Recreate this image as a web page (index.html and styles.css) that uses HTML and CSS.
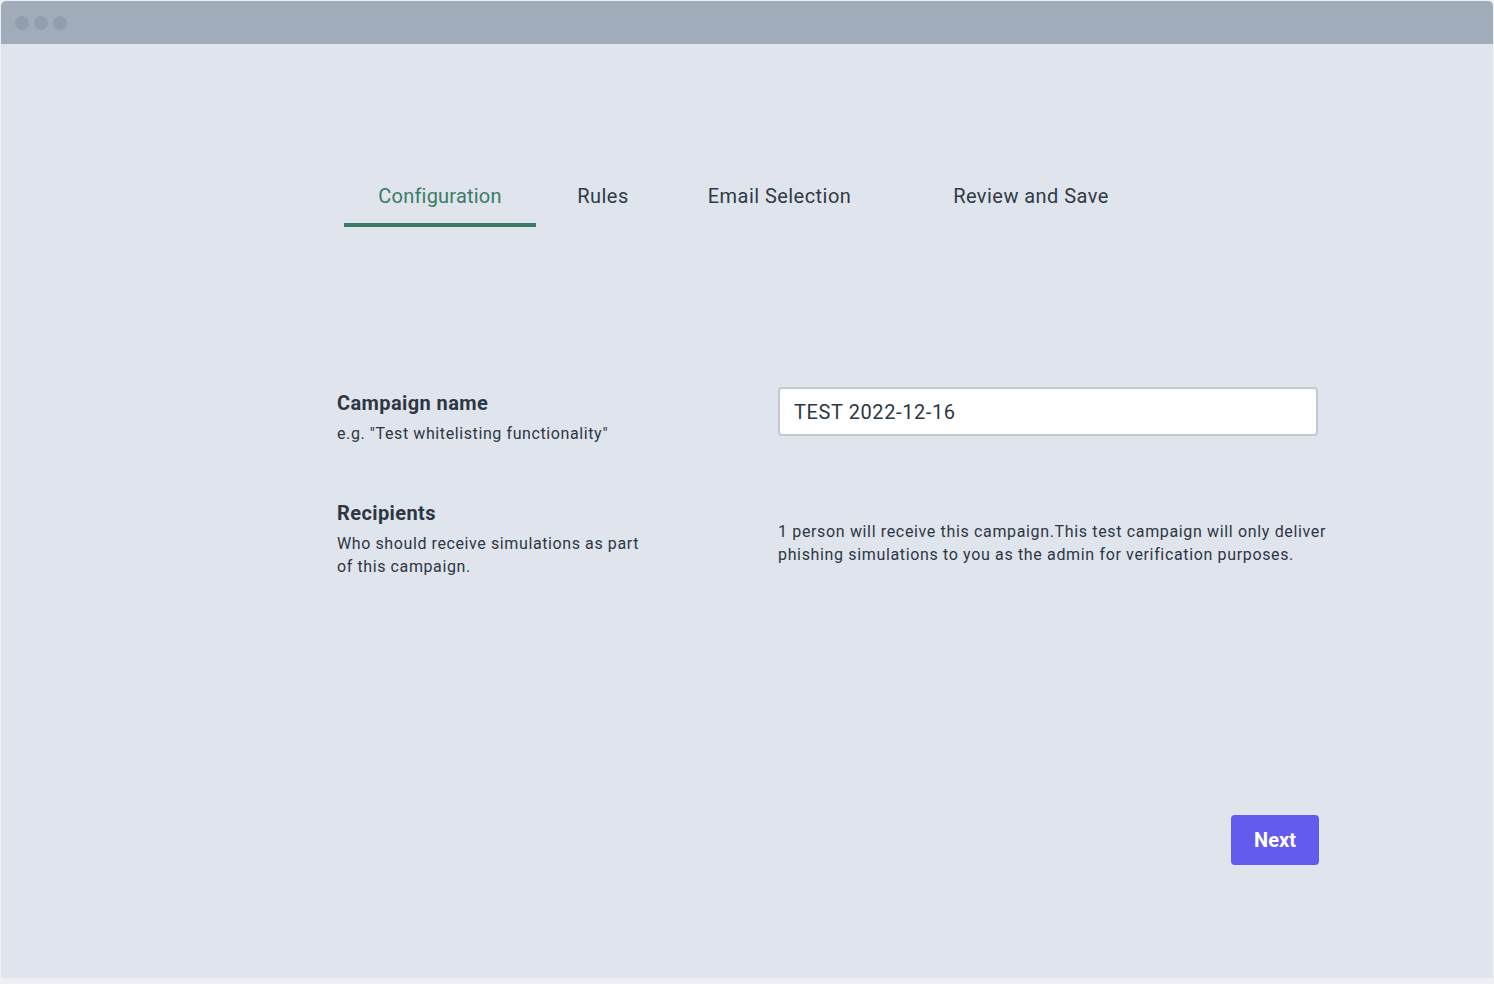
FILE: index.html
```html
<!DOCTYPE html>
<html lang="en">
<head>
<meta charset="utf-8">
<title>Campaign configuration</title>
<link rel="stylesheet" href="styles.css">
</head>
<body>
<div class="window">
  <div class="titlebar">
    <span class="dot"></span><span class="dot"></span><span class="dot"></span>
  </div>
  <div class="content">
    <nav class="tabs">
      <div class="tab tab-config active">Configuration</div>
      <div class="tab tab-rules">Rules</div>
      <div class="tab tab-email">Email Selection</div>
      <div class="tab tab-review">Review and Save</div>
    </nav>
    <div class="form">
      <div class="row row-name">
        <div class="label-col">
          <div class="label">Campaign name</div>
          <div class="hint">e.g. "Test whitelisting functionality"</div>
        </div>
        <div class="field-col">
          <div class="input">TEST 2022-12-16</div>
        </div>
      </div>
      <div class="row row-recip">
        <div class="label-col">
          <div class="label">Recipients</div>
          <div class="hint">Who should receive simulations as part<br>of this campaign.</div>
        </div>
        <div class="field-col">
          <p class="info">1 person will receive this campaign.This test campaign will only deliver phishing simulations to you as the admin for verification purposes.</p>
        </div>
      </div>
    </div>
    <div class="actions">
      <button class="next">Next</button>
    </div>
  </div>
</div>
</body>
</html>
```

FILE: styles.css
```css
* { box-sizing: border-box; }
html, body { margin: 0; padding: 0; }
body {
  background: #eef0f3;
  font-family: Roboto, "Liberation Sans", sans-serif;
  color: #2c3743;
  width: 1494px;
  height: 984px;
  overflow: hidden;
}
.window {
  margin: 1px 1px 0 1px;
  width: 1492px;
  height: 977px;
  background: #e0e4ec;
  border-radius: 5px 5px 0 0;
  overflow: hidden;
}
.titlebar {
  height: 43px;
  background: #a1acba;
  display: flex;
  align-items: center;
  gap: 5px;
  padding: 0 0 0 14px;
}
.dot {
  width: 14px;
  height: 14px;
  border-radius: 50%;
  background: #929eac;
}
.content {
  position: relative;
  height: 934px;
}
.tabs {
  display: flex;
  padding: 140px 0 0 343px;
}
.tab {
  font-size: 20px;
  line-height: 24px;
  color: #2f3a46;
  text-align: center;
  padding-bottom: 15px;
  border-bottom: 4px solid transparent;
  letter-spacing: 0.45px;
}
.tab-config { width: 192px; letter-spacing: 0.2px; }
.tab-rules { width: 134px; }
.tab-email { width: 219px; }
.tab-review { width: 284px; }
.tab.active {
  color: #3b7a66;
  border-bottom-color: #3b7a66;
}
.form {
  margin: 160px 0 0 336px;
  width: 1000px;
}
.row {
  display: flex;
}
.label-col { width: 441px; flex: none; }
.field-col { width: 559px; flex: none; }
.label {
  font-size: 20px;
  font-weight: 700;
  line-height: 26px;
  letter-spacing: 0.4px;
}
.hint {
  font-size: 16px;
  line-height: 23px;
  margin-top: 6px;
  letter-spacing: 0.6px;
}
.row-name { padding-top: 3px; }
.row-name .field-col { margin-top: -3px; }
.input {
  height: 49px;
  width: 540px;
  background: #ffffff;
  border: 2px solid #c3c9d1;
  border-radius: 4px;
  padding: 1px 14px 0 14px;
  font-size: 20px;
  line-height: 45px;
  letter-spacing: 0.6px;
  color: #2c3743;
}
.row-recip { margin-top: 55px; }
.info {
  margin: 20px 0 0 0;
  font-size: 16px;
  line-height: 23px;
  letter-spacing: 0.65px;
}
.actions {
  position: absolute;
  left: 1230px;
  top: 771px;
}
.next {
  width: 88px;
  height: 50px;
  background: #625bec;
  border: none;
  border-radius: 4px;
  color: #ffffff;
  font-family: Roboto, "Liberation Sans", sans-serif;
  font-size: 20px;
  font-weight: 700;
  padding: 0;
}
```
